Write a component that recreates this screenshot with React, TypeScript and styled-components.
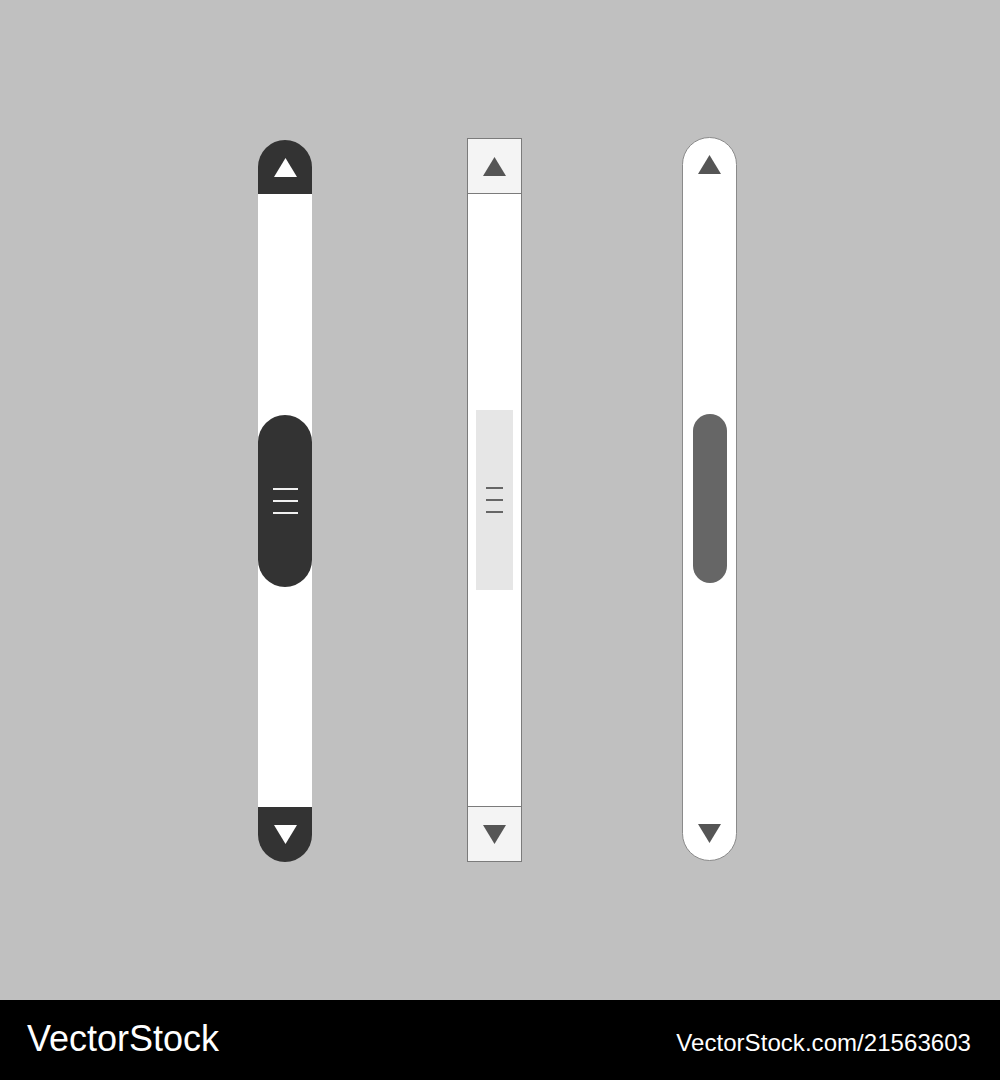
import React from "react";
import styled, { createGlobalStyle } from "styled-components";

const Global = createGlobalStyle`
  html, body { margin: 0; padding: 0; }
  body { width: 1000px; height: 1080px; overflow: hidden; font-family: "Liberation Sans", Arial, sans-serif; }
`;

const Page = styled.div`
  width: 1000px;
  height: 1080px;
  display: flex;
  flex-direction: column;
`;

const Stage = styled.main`
  height: 1000px;
  background: #c0c0c0;
  display: flex;
  align-items: flex-start;
  padding-left: 258px;
  box-sizing: border-box;
`;

/* ---------- shared arrow ---------- */
const Arrow = ({ dir, color }: { dir: "up" | "down"; color: string }) => (
  <svg width="23" height="19" viewBox="0 0 23 19" style={{ display: "block" }}>
    {dir === "up" ? (
      <polygon points="11.5,0 23,19 0,19" fill={color} />
    ) : (
      <polygon points="0,0 23,0 11.5,19" fill={color} />
    )}
  </svg>
);

/* ---------- dark pill scrollbar ---------- */
const DarkBar = styled.div<{ $lead: number; $top: number }>`
  margin-left: ${(p) => p.$lead}px;
  margin-top: ${(p) => p.$top}px;
  width: 54px;
  height: 722px;
  display: flex;
  flex-direction: column;
`;

const DarkCap = styled.div<{ $end: "top" | "bottom" }>`
  height: ${(p) => (p.$end === "top" ? 54 : 55)}px;
  background: #333333;
  display: flex;
  align-items: center;
  justify-content: center;
  border-radius: ${(p) => (p.$end === "top" ? "27px 27px 0 0" : "0 0 27px 27px")};
`;

const DarkTrack = styled.div`
  flex: 1;
  background: #ffffff;
`;

const DarkThumb = styled.div<{ $offset: number }>`
  margin-top: ${(p) => p.$offset}px;
  height: 172px;
  border-radius: 27px;
  background: #333333;
  display: flex;
  flex-direction: column;
  align-items: center;
  justify-content: center;
  gap: 10px;
`;

const Grip = styled.span<{ $w: number; $color: string }>`
  display: block;
  width: ${(p) => p.$w}px;
  height: 2px;
  background: ${(p) => p.$color};
`;

/* ---------- classic boxed scrollbar ---------- */
const BoxBar = styled.div<{ $lead: number; $top: number }>`
  margin-left: ${(p) => p.$lead}px;
  margin-top: ${(p) => p.$top}px;
  width: 55px;
  height: 724px;
  box-sizing: border-box;
  border: 1px solid #7b7b7b;
  background: #ffffff;
  display: flex;
  flex-direction: column;
`;

const BoxButton = styled.div<{ $end: "top" | "bottom" }>`
  height: 55px;
  box-sizing: border-box;
  background: #f4f4f4;
  ${(p) => (p.$end === "top" ? "border-bottom" : "border-top")}: 1px solid #7b7b7b;
  display: flex;
  align-items: center;
  justify-content: center;
`;

const BoxTrack = styled.div`
  flex: 1;
  display: flex;
  flex-direction: column;
  align-items: center;
`;

const BoxThumb = styled.div<{ $offset: number }>`
  margin-top: ${(p) => p.$offset}px;
  width: 37px;
  height: 180px;
  background: #e6e6e6;
  display: flex;
  flex-direction: column;
  align-items: center;
  justify-content: center;
  gap: 10px;
`;

/* ---------- minimal rounded scrollbar ---------- */
const SoftBar = styled.div<{ $lead: number; $top: number }>`
  margin-left: ${(p) => p.$lead}px;
  margin-top: ${(p) => p.$top}px;
  width: 55px;
  height: 724px;
  box-sizing: border-box;
  border: 1px solid #8a8a8a;
  border-radius: 28px;
  background: #ffffff;
  padding: 17px 0;
  display: flex;
  flex-direction: column;
  align-items: center;
`;

const SoftThumb = styled.div<{ $offset: number }>`
  margin-top: ${(p) => p.$offset}px;
  width: 34px;
  height: 169px;
  border-radius: 17px;
  background: #666666;
`;

const Tail = styled.div`
  margin-top: auto;
`;

/* ---------- footer ---------- */
const Footer = styled.footer`
  height: 80px;
  background: #000000;
  color: #ffffff;
  display: flex;
  justify-content: space-between;
  align-items: baseline;
  padding: 21px 29px 0 27px;
  box-sizing: border-box;
`;

const Brand = styled.span`
  font-size: 36px;
  line-height: 36px;
  letter-spacing: 0;
`;

const Ref = styled.span`
  font-size: 24px;
  line-height: 24px;
  letter-spacing: 0.05px;
`;

export default function App() {
  return (
    <Page>
      <Global />
      <Stage>
        <DarkBar $lead={0} $top={140}>
          <DarkCap $end="top">
            <Arrow dir="up" color="#ffffff" />
          </DarkCap>
          <DarkTrack>
            <DarkThumb $offset={221}>
              <Grip $w={25} $color="#f0f0f0" />
              <Grip $w={25} $color="#f0f0f0" />
              <Grip $w={25} $color="#f0f0f0" />
            </DarkThumb>
          </DarkTrack>
          <DarkCap $end="bottom">
            <Arrow dir="down" color="#ffffff" />
          </DarkCap>
        </DarkBar>

        <BoxBar $lead={155} $top={138}>
          <BoxButton $end="top">
            <Arrow dir="up" color="#555555" />
          </BoxButton>
          <BoxTrack>
            <BoxThumb $offset={216}>
              <Grip $w={17} $color="#666666" />
              <Grip $w={17} $color="#666666" />
              <Grip $w={17} $color="#666666" />
            </BoxThumb>
          </BoxTrack>
          <BoxButton $end="bottom">
            <Arrow dir="down" color="#555555" />
          </BoxButton>
        </BoxBar>

        <SoftBar $lead={160} $top={137}>
          <Arrow dir="up" color="#555555" />
          <SoftThumb $offset={240} />
          <Tail>
            <Arrow dir="down" color="#555555" />
          </Tail>
        </SoftBar>
      </Stage>
      <Footer>
        <Brand>VectorStock</Brand>
        <Ref>VectorStock.com/21563603</Ref>
      </Footer>
    </Page>
  );
}
